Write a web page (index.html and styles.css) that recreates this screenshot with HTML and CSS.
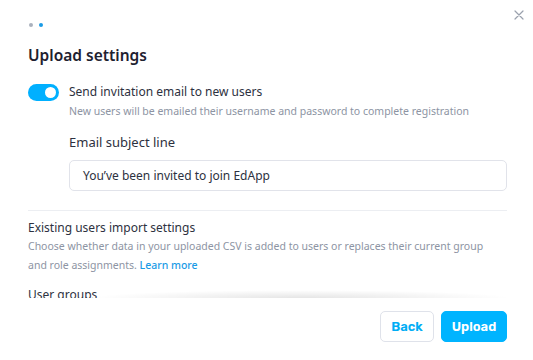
FILE: index.html
```html
<!DOCTYPE html>
<html lang="en">
<head>
    <meta charset="UTF-8">
    <meta name="viewport" content="width=device-width, initial-scale=1.0">
    <title>Upload settings</title>
    <link rel="stylesheet" href="styles.css">
</head>
<body>

    <div class="modal">
        <button class="close-btn" aria-label="Close">
            <svg width="10" height="10" viewBox="0 0 10 10">
                <path d="M1 1L9 9M9 1L1 9" stroke="#9aa1ad" stroke-width="1.2" stroke-linecap="round"/>
            </svg>
        </button>

        <div class="modal-body">
            <div class="steps">
                <span class="step"></span>
                <span class="step step-active"></span>
            </div>

            <h2 class="title">Upload settings</h2>

            <div class="toggle-row">
                <span class="toggle"><span class="toggle-knob"></span></span>
                <div class="toggle-text">
                    <div class="toggle-label">Send invitation email to new users</div>
                    <div class="hint">New users will be emailed their username and password to complete registration</div>
                </div>
            </div>

            <div class="field">
                <label class="field-label">Email subject line</label>
                <div class="input">You’ve been invited to join EdApp</div>
            </div>

            <hr class="divider">

            <div class="section-title">Existing users import settings</div>
            <p class="hint section-hint">Choose whether data in your uploaded CSV is added to users or replaces their current group and role assignments. <a href="#" class="link">Learn more</a></p>

            <div class="section-title groups-title">User groups</div>
        </div>

        <div class="modal-footer">
            <button class="btn btn-back">Back</button>
            <button class="btn btn-upload">Upload</button>
        </div>
    </div>

</body>
</html>
```

FILE: styles.css
```css
* {
    margin: 0;
    padding: 0;
    box-sizing: border-box;
}

body {
    font-family: 'Noto Sans', 'Open Sans', sans-serif;
    background-color: #ffffff;
    color: #2d3140;
}

.modal {
    position: relative;
    width: 533px;
    height: 360px;
    display: flex;
    flex-direction: column;
    background: #ffffff;
}

.close-btn {
    position: absolute;
    top: 10px;
    right: 9px;
    width: 10px;
    height: 10px;
    border: none;
    background: none;
    display: flex;
    cursor: pointer;
}

.modal-body {
    flex: 1;
    overflow: hidden;
    padding: 23px 26px 0 28px;
}

.steps {
    display: flex;
    gap: 6px;
    padding-left: 1px;
}

.step {
    width: 4px;
    height: 4px;
    border-radius: 50%;
    background: #aab1bd;
}

.step-active {
    background: #1a9be6;
}

.title {
    font-size: 15.5px;
    font-weight: 600;
    color: #1e2130;
    margin-top: 16px;
    line-height: 24px;
}

.toggle-row {
    display: flex;
    gap: 10px;
    margin-top: 15px;
}

.toggle {
    flex: none;
    width: 31px;
    height: 17px;
    border-radius: 9px;
    background: #00b0ff;
    display: flex;
    align-items: center;
    justify-content: flex-end;
    padding-right: 3px;
    margin-top: 2px;
}

.toggle-knob {
    width: 11px;
    height: 11px;
    border-radius: 50%;
    background: #ffffff;
}

.toggle-label {
    font-size: 12px;
    line-height: 20px;
}

.hint {
    font-size: 10.5px;
    line-height: 19px;
    color: #8d94a3;
}

.field {
    margin-left: 41px;
    margin-top: 11px;
}

.field-label {
    display: block;
    font-size: 13px;
    line-height: 20px;
}

.input {
    margin-top: 8px;
    height: 31px;
    border: 1px solid #e1e3ea;
    border-radius: 5px;
    padding: 0 13px;
    font-size: 12px;
    line-height: 29px;
    color: #2d3140;
}

.divider {
    border: none;
    border-top: 1px solid #eceef2;
    margin-top: 19px;
}

.section-title {
    font-size: 12px;
    line-height: 18px;
    margin-top: 8px;
}

.section-hint {
    max-width: 465px;
}

.link {
    color: #1a9be6;
    text-decoration: none;
    font-weight: 500;
}

.groups-title {
    margin-top: 11px;
}

.modal-footer {
    position: relative;
    display: flex;
    justify-content: flex-end;
    gap: 7px;
    padding: 13px 26px 18px;
    background: #ffffff;
}

.modal-footer::before {
    content: '';
    position: absolute;
    top: -8px;
    left: 90px;
    right: 20px;
    height: 8px;
    background: radial-gradient(ellipse at bottom, rgba(0, 0, 0, 0.1), rgba(0, 0, 0, 0) 70%);
}

.btn {
    font-family: 'Rubik', 'Noto Sans', sans-serif;
    font-size: 13px;
    font-weight: 600;
    height: 31px;
    border-radius: 5px;
    cursor: pointer;
}

.btn-back {
    width: 54px;
    background: #ffffff;
    border: 1px solid #dfe2ea;
    color: #00adf5;
}

.btn-upload {
    width: 66px;
    background: #00b4ff;
    border: 1px solid #00b4ff;
    color: #ffffff;
}
```
